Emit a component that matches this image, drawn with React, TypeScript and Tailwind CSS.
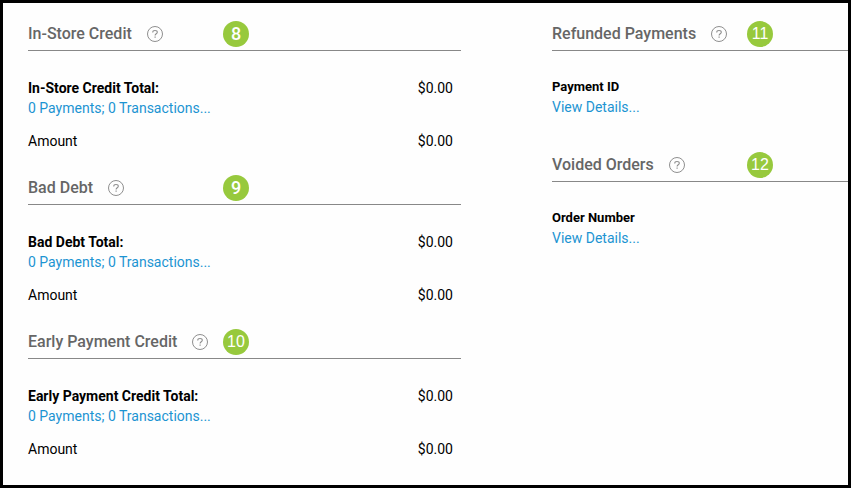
import type { ReactNode } from 'react'
import { clsx } from 'clsx'

type SectionHeaderProps = {
  title: string
  step: number
}

type CreditSection = {
  title: string
  step: number
  total: string
  amount: string
}

type RecordSection = {
  title: string
  step: number
  label: string
}

const creditSections: CreditSection[] = [
  { title: 'In-Store Credit', step: 8, total: '$0.00', amount: '$0.00' },
  { title: 'Bad Debt', step: 9, total: '$0.00', amount: '$0.00' },
  { title: 'Early Payment Credit', step: 10, total: '$0.00', amount: '$0.00' },
]

const recordSections: RecordSection[] = [
  { title: 'Refunded Payments', step: 11, label: 'Payment ID' },
  { title: 'Voided Orders', step: 12, label: 'Order Number' },
]

function HelpIcon() {
  return (
    <svg className="size-4" viewBox="0 0 16 16" fill="none" stroke="#8f8f8f" aria-hidden="true">
      <circle cx="8" cy="8" r="7.5" strokeWidth="1" />
      <path d="M5.7 6.4C5.7 5.1 6.6 4.5 8 4.5s2.3.6 2.3 1.8c0 1.4-2.2 1.5-2.2 3.1" strokeWidth="1.1" />
      <path d="M8.1 10.4v1.3" strokeWidth="1.2" />
    </svg>
  )
}

function SectionHeader({ title, step }: SectionHeaderProps) {
  return (
    <header className="relative flex h-[35px] items-center gap-[15px] border-b border-[#888] pt-px">
      <h2 className="text-base font-medium text-[#666]">{title}</h2>
      <button type="button" aria-label={`About ${title}`}>
        <HelpIcon />
      </button>
      <span
        className={clsx(
          'absolute left-[195px] flex size-[26px] items-center justify-center rounded-full bg-[#97c93d] text-white',
          step < 10
            ? 'text-lg font-medium'
            : "font-['Liberation_Sans',Arial,sans-serif] text-base",
        )}
      >
        {step}
      </span>
    </header>
  )
}

function DetailLink({ children }: { children: ReactNode }) {
  return (
    <a href="#" className="text-[#1c94d2] hover:underline">
      {children}
    </a>
  )
}

export default function App() {
  return (
    <main className="grid min-h-screen grid-cols-[minmax(0,433fr)_minmax(0,296fr)] gap-x-[91px] border-[3px] border-black bg-[#fefefe] pt-[13px] pb-4 pl-[25px] font-[Roboto,Arial,sans-serif] text-sm text-black">
      <div className="flex flex-col gap-[19px]">
        {creditSections.map((section) => (
          <section key={section.title}>
            <SectionHeader title={section.title} step={section.step} />
            <dl className="pt-[27px] pr-2">
              <div className="flex justify-between">
                <dt className="font-bold">{section.title} Total:</dt>
                <dd>{section.total}</dd>
              </div>
              <div>
                <DetailLink>0 Payments; 0 Transactions...</DetailLink>
              </div>
              <div className="mt-[13px] flex justify-between">
                <dt>Amount</dt>
                <dd>{section.amount}</dd>
              </div>
            </dl>
          </section>
        ))}
      </div>

      <div className="flex flex-col gap-[30px]">
        {recordSections.map((section) => (
          <section key={section.title}>
            <SectionHeader title={section.title} step={section.step} />
            <div className="pt-[26px]">
              <h3 className="text-[13px] leading-5 font-bold">{section.label}</h3>
              <DetailLink>View Details...</DetailLink>
            </div>
          </section>
        ))}
      </div>
    </main>
  )
}
